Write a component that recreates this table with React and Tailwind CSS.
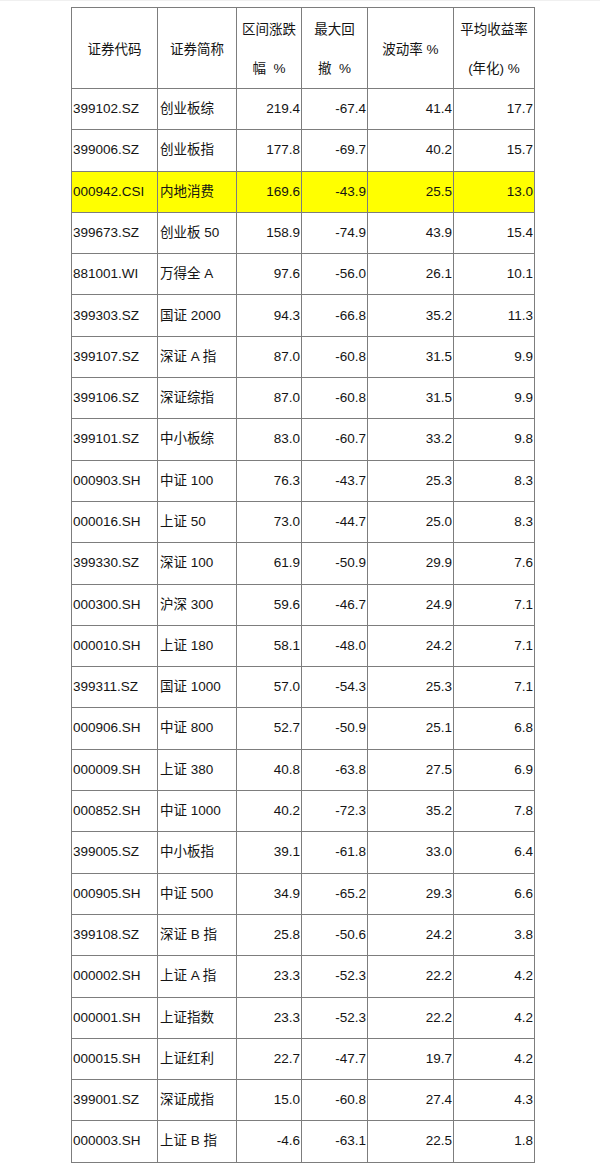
const rows = [
  ["399102.SZ", "创业板综", "219.4", "-67.4", "41.4", "17.7"],
  ["399006.SZ", "创业板指", "177.8", "-69.7", "40.2", "15.7"],
  ["000942.CSI", "内地消费", "169.6", "-43.9", "25.5", "13.0", true],
  ["399673.SZ", "创业板 50", "158.9", "-74.9", "43.9", "15.4"],
  ["881001.WI", "万得全 A", "97.6", "-56.0", "26.1", "10.1"],
  ["399303.SZ", "国证 2000", "94.3", "-66.8", "35.2", "11.3"],
  ["399107.SZ", "深证 A 指", "87.0", "-60.8", "31.5", "9.9"],
  ["399106.SZ", "深证综指", "87.0", "-60.8", "31.5", "9.9"],
  ["399101.SZ", "中小板综", "83.0", "-60.7", "33.2", "9.8"],
  ["000903.SH", "中证 100", "76.3", "-43.7", "25.3", "8.3"],
  ["000016.SH", "上证 50", "73.0", "-44.7", "25.0", "8.3"],
  ["399330.SZ", "深证 100", "61.9", "-50.9", "29.9", "7.6"],
  ["000300.SH", "沪深 300", "59.6", "-46.7", "24.9", "7.1"],
  ["000010.SH", "上证 180", "58.1", "-48.0", "24.2", "7.1"],
  ["399311.SZ", "国证 1000", "57.0", "-54.3", "25.3", "7.1"],
  ["000906.SH", "中证 800", "52.7", "-50.9", "25.1", "6.8"],
  ["000009.SH", "上证 380", "40.8", "-63.8", "27.5", "6.9"],
  ["000852.SH", "中证 1000", "40.2", "-72.3", "35.2", "7.8"],
  ["399005.SZ", "中小板指", "39.1", "-61.8", "33.0", "6.4"],
  ["000905.SH", "中证 500", "34.9", "-65.2", "29.3", "6.6"],
  ["399108.SZ", "深证 B 指", "25.8", "-50.6", "24.2", "3.8"],
  ["000002.SH", "上证 A 指", "23.3", "-52.3", "22.2", "4.2"],
  ["000001.SH", "上证指数", "23.3", "-52.3", "22.2", "4.2"],
  ["000015.SH", "上证红利", "22.7", "-47.7", "19.7", "4.2"],
  ["399001.SZ", "深证成指", "15.0", "-60.8", "27.4", "4.3"],
  ["000003.SH", "上证 B 指", "-4.6", "-63.1", "22.5", "1.8"],
];

// header cells, each entry is the list of its lines
const headers = [
  ["证券代码"],
  ["证券简称"],
  ["区间涨跌", "幅\u00a0\u00a0%"],
  ["最大回", "撤\u00a0\u00a0%"],
  ["波动率 %"],
  ["平均收益率", "(年化) %"],
];

export default function App() {
  return (
    <div
      className="w-[600px] h-[1173px] bg-white border-t border-[#f0f0f0] text-[#141414] text-[13.5px]"
      style={{ fontFamily: '"Liberation Sans", Arial, "Noto Sans CJK SC", sans-serif' }}
    >
      <table className="ml-[71px] mt-[6px] border-collapse table-fixed w-[463px]">
        <colgroup>
          <col className="w-[86px]" />
          <col className="w-[79px]" />
          <col className="w-[65px]" />
          <col className="w-[66px]" />
          <col className="w-[86px]" />
          <col className="w-[81px]" />
        </colgroup>
        <thead>
          <tr className="h-[81px]">
            {headers.map((h, i) => (
              <th
                key={i}
                className="border border-[#7d7d7d] font-normal text-center align-middle leading-[39px] pt-[2px] whitespace-nowrap"
              >
                {h.map((line, j) => (
                  <div key={j}>{line}</div>
                ))}
              </th>
            ))}
          </tr>
        </thead>
        <tbody>
          {rows.map((r) => (
            <tr key={r[0]} className={r[6] ? "h-[41.3px] bg-[#ffff00]" : "h-[41.3px]"}>
              <td className="border border-[#7d7d7d] pl-[1px] whitespace-nowrap">{r[0]}</td>
              <td className="border border-[#7d7d7d] pl-[2px] whitespace-nowrap">{r[1]}</td>
              {r.slice(2, 6).map((v, i) => (
                <td key={i} className="border border-[#7d7d7d] pr-[1px] text-right">
                  {v}
                </td>
              ))}
            </tr>
          ))}
        </tbody>
      </table>
    </div>
  );
}
